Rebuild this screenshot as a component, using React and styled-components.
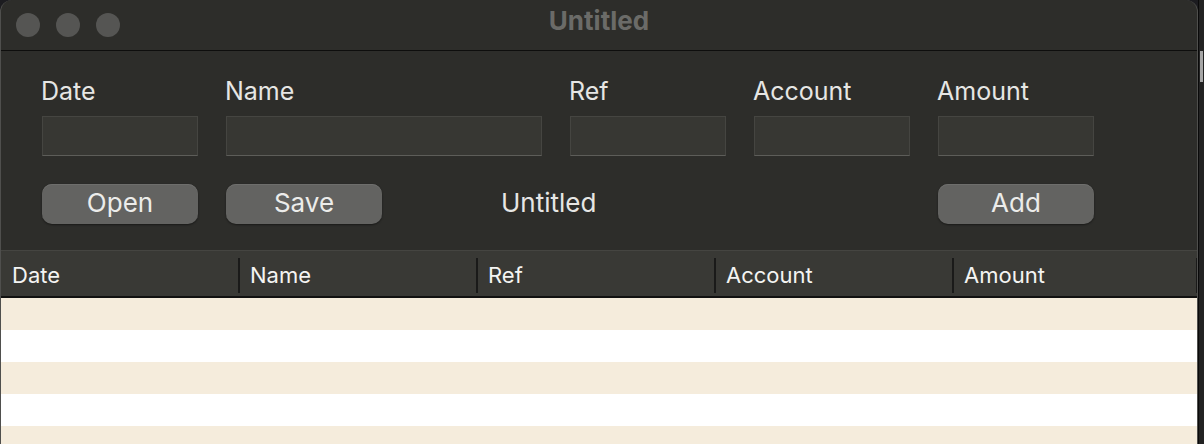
import React from "react";
import styled, { createGlobalStyle } from "styled-components";

const columns = ["Date", "Name", "Ref", "Account", "Amount"];
const rows = [0, 1, 2, 3, 4];

const App = () => {
  return (
    <>
      <GlobalStyle />
      <Screen>
        <Window>
          <TitleBar>
            <Lights>
              <Light />
              <Light />
              <Light />
            </Lights>
            <WindowTitle>Untitled</WindowTitle>
          </TitleBar>
          <Form>
            <FieldGrid>
              {columns.map((col) => (
                <Field key={col}>
                  <Label>{col}</Label>
                  <Input />
                </Field>
              ))}
            </FieldGrid>
            <ButtonRow>
              <Button>Open</Button>
              <Button>Save</Button>
              <Status>Untitled</Status>
              <Button>Add</Button>
            </ButtonRow>
          </Form>
          <Table>
            <HeaderRow>
              {columns.map((col) => (
                <HeaderCell key={col}>{col}</HeaderCell>
              ))}
            </HeaderRow>
            {rows.map((r) => (
              <Row key={r} $striped={r % 2 === 0} />
            ))}
          </Table>
        </Window>
        <SideStrip>
          <Thumb />
        </SideStrip>
      </Screen>
    </>
  );
};

export default App;

const GlobalStyle = createGlobalStyle`
  html, body {
    margin: 0;
    padding: 0;
    background: #1c1c20;
    overflow: hidden;
  }
  body {
    font-family: Inter, "Liberation Sans", sans-serif;
  }
`;

const Screen = styled.div`
  display: flex;
  width: 1204px;
  height: 444px;
  overflow: hidden;
`;

const Window = styled.div`
  width: 1198px;
  flex-shrink: 0;
  box-sizing: border-box;
  background: #2d2d2a;
  border-left: 1px solid #4f4f4d;
  border-right: 1px solid #4f4f4d;
  border-radius: 12px 12px 0 0;
  overflow: hidden;
  display: flex;
  flex-direction: column;
`;

const TitleBar = styled.div`
  height: 50px;
  flex-shrink: 0;
  border-bottom: 1px solid #0e0e0d;
  display: grid;
  grid-template-columns: 1fr auto 1fr;
  align-items: center;
`;

const Lights = styled.div`
  display: flex;
  gap: 16px;
  padding-left: 15px;
`;

const Light = styled.span`
  width: 24px;
  height: 24px;
  border-radius: 50%;
  background: #555553;
`;

const WindowTitle = styled.div`
  font-size: 26px;
  font-weight: 700;
  color: #6b6b68;
  margin-top: -9px;
`;

const Form = styled.div`
  flex-shrink: 0;
  padding: 26px 0 26px 41px;
  display: flex;
  flex-direction: column;
  gap: 28px;
`;

const FieldGrid = styled.div`
  display: grid;
  grid-template-columns: 156px 316px 156px 156px 156px;
  column-gap: 28px;
`;

const Field = styled.div`
  display: flex;
  flex-direction: column;
  gap: 11px;
`;

const Label = styled.div`
  font-size: 25px;
  line-height: 28px;
  color: #e6e6e4;
  margin-left: -1px;
`;

const Input = styled.div`
  height: 40px;
  box-sizing: border-box;
  background: #373733;
  border: 1px solid #454541;
  border-bottom-color: #5d5d59;
`;

const ButtonRow = styled.div`
  display: grid;
  grid-template-columns: 156px 156px 500px 156px;
  column-gap: 28px;
  align-items: center;
`;

const Button = styled.button`
  height: 40px;
  border: none;
  border-radius: 10px;
  background: #636361;
  box-shadow: inset 0 1px 0 #6e6e6c, 0 1px 2px rgba(0, 0, 0, 0.45);
  color: #ececea;
  font-family: Inter, "Liberation Sans", sans-serif;
  font-size: 26px;
  padding: 0 0 3px;
`;

const Status = styled.div`
  font-size: 26px;
  color: #e6e6e4;
  padding-left: 91px;
  margin-top: -3px;
`;

const Table = styled.div`
  flex: 1;
  min-height: 0;
  overflow: hidden;
  display: flex;
  flex-direction: column;
`;

const HeaderRow = styled.div`
  flex-shrink: 0;
  display: grid;
  grid-template-columns: repeat(4, 238px) 1fr;
  height: 45px;
  background: #393935;
  border-top: 1px solid #454541;
  border-bottom: 2px solid #111110;
`;

const HeaderCell = styled.div`
  position: relative;
  display: flex;
  align-items: center;
  padding-left: 11px;
  padding-top: 3px;
  font-size: 22px;
  color: #f4f4f2;

  &::after {
    content: "";
    position: absolute;
    right: -1px;
    top: 7px;
    bottom: 3px;
    width: 2px;
    background: #1a1a19;
  }
`;

const Row = styled.div`
  height: 32px;
  flex-shrink: 0;
  background: ${(p) => (p.$striped ? "#f5ecdc" : "#ffffff")};
`;

const SideStrip = styled.div`
  flex: 1;
  background: #222222;
  border-left: 1px solid #0a0a0a;
  padding-top: 51px;
`;

const Thumb = styled.div`
  width: 3px;
  height: 31px;
  margin-left: 1px;
  background: #a6a6a6;
`;
